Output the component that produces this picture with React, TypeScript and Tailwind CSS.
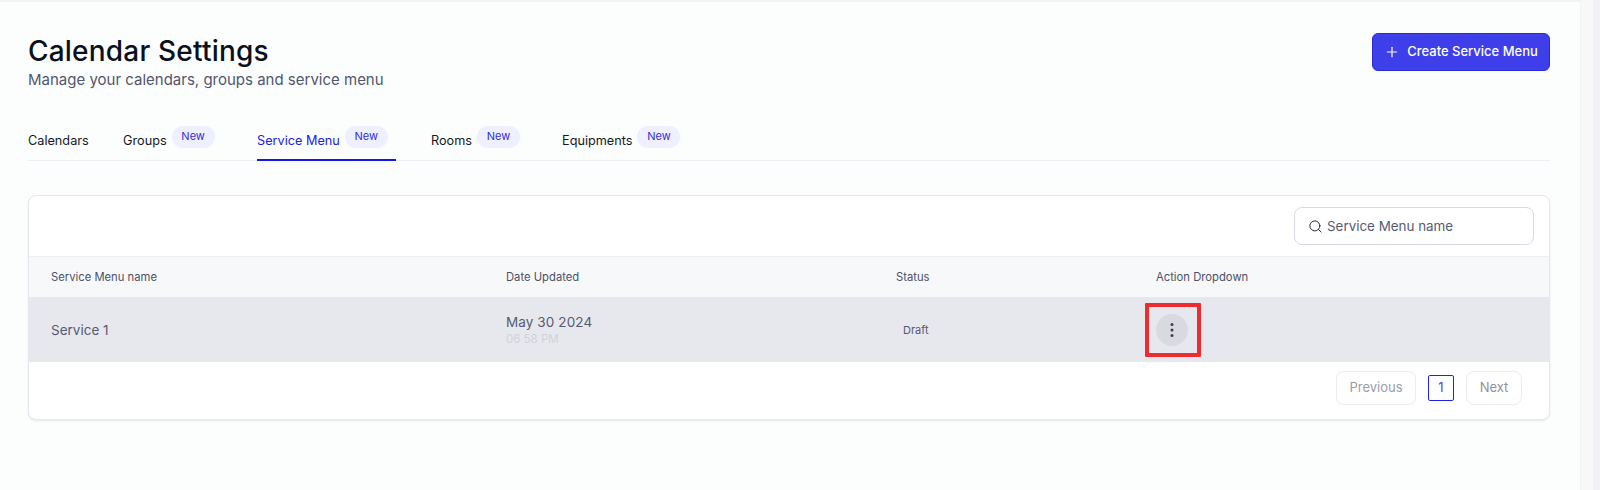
import React from "react";
import { Plus, Search } from "lucide-react";

const tabs = [
  { label: "Calendars", badge: false, w: "w-[95px]" },
  { label: "Groups", badge: true, w: "w-[134px]" },
  { label: "Service Menu", badge: true, w: "w-[139px] mr-[35px]" },
  { label: "Rooms", badge: true, w: "w-[131px]" },
  { label: "Equipments", badge: true, w: "w-[125px]" },
];

export default function App() {
  return (
    <div className="flex h-[490px] w-[1600px] overflow-hidden bg-[#f0f2f8] font-['Inter',sans-serif]">
      <main className="h-full w-[1581px] shrink-0 border-t-2 border-r border-[#f3f3f5] bg-[#fcfdfd] pl-[28px] pr-[30px]">
        <header className="flex items-start justify-between pt-[31px]">
          <div>
            <h1 className="text-[28px] leading-[36px] font-medium tracking-[0.2px] text-[#0b1020]">Calendar Settings</h1>
            <p className="mt-[-1px] text-[15px] leading-[24px] text-[#51566f]">Manage your calendars, groups and service menu</p>
          </div>
          <button className="flex h-[38px] w-[178px] items-center justify-center gap-[7px] rounded-[6px] border border-[#2a2ad8] bg-[#3e3fe8] text-[13px] font-medium text-white">
            <Plus size={16} strokeWidth={1.8} />
            Create Service Menu
          </button>
        </header>

        <nav className="mt-[32px] flex h-[37px] border-b border-[#eeeef6]">
          {tabs.map((t) => {
            const active = t.label === "Service Menu";
            return (
              <div key={t.label} className={`${t.w} shrink-0`}>
                <div className={`flex h-[37px] items-start ${active ? "border-b-2 border-[#1616f0]" : ""}`}>
                  <span className={`mt-[7px] whitespace-nowrap text-[12.7px] leading-[20px] ${active ? "text-[#2020e6]" : "text-[#16181f]"}`}>{t.label}</span>
                  {t.badge && (
                    <span className="ml-[5px] mt-[2px] flex h-[22px] w-[43px] shrink-0 items-center justify-center rounded-full bg-[#eeefff] pb-[2px] text-[11px] text-[#3030e0]">New</span>
                  )}
                </div>
              </div>
            );
          })}
        </nav>

        <section className="mt-[34px] h-[225px] overflow-hidden rounded-[8px] border border-[#e7e8ef] bg-white shadow-[0_1px_2px_rgba(30,30,60,0.10)]">
          <div className="flex h-[61px] items-start justify-end border-b border-[#eeeff3] pr-[15px] pt-[11px]">
            <div className="flex h-[38px] w-[240px] items-center gap-[4px] rounded-[8px] border border-[#d8d9e4] pl-[13px]">
              <Search size={15} strokeWidth={1.6} className="text-[#272b3d]" />
              <span className="text-[13.4px] text-[#565b73]">Service Menu name</span>
            </div>
          </div>

          <div className="flex h-[40px] items-center bg-[#f7f8fa] pl-[22px] text-[11.25px] text-[#4c5168]">
            <div className="w-[455px]">Service Menu name</div>
            <div className="w-[390px]">Date Updated</div>
            <div className="w-[260px]">Status</div>
            <div>Action Dropdown</div>
          </div>

          <div className="flex h-[65px] items-center bg-[#e7e8ed] pl-[22px] text-[#565a70]">
            <div className="w-[455px] pt-[1px] text-[13.5px]">Service 1</div>
            <div className="w-[390px]">
              <div className="text-[13.5px] leading-[18px] tracking-[0.1px]">May 30 2024</div>
              <div className="text-[11.5px] leading-[16px] text-[#d0d2da]">06 58 PM</div>
            </div>
            <div className="w-[260px] pl-[7px] pt-[1px] text-[11px]">Draft</div>
            <div className="relative">
              <div className="flex h-[32px] w-[32px] items-center justify-center rounded-full bg-[#d9dadf]">
                <svg width="4" height="16" viewBox="0 0 4 16" fill="#3a3e52">
                  <circle cx="2" cy="2.5" r="1.5" />
                  <circle cx="2" cy="8" r="1.5" />
                  <circle cx="2" cy="13.5" r="1.5" />
                </svg>
              </div>
              <div className="absolute left-[-11px] top-[-11px] h-[54px] w-[56px] rounded-[1px] border-[4px] border-[#ee2c2f]" />
            </div>
          </div>

          <div className="flex items-start justify-end gap-[12px] pr-[27px] pt-[9px] text-[13px]">
            <button className="h-[34px] w-[80px] rounded-[8px] border border-[#ebebf0] text-[#9a9cab]">Previous</button>
            <button className="mt-[4px] h-[26px] w-[26px] rounded-[2px] border border-[#2222ee] text-[#4a4ae0]">1</button>
            <button className="h-[34px] w-[56px] rounded-[8px] border border-[#ebebf0] text-[#8f91a1]">Next</button>
          </div>
        </section>
      </main>
      <div className="h-full w-[12px] shrink-0 bg-[#f8f8f9]" />
    </div>
  );
}
